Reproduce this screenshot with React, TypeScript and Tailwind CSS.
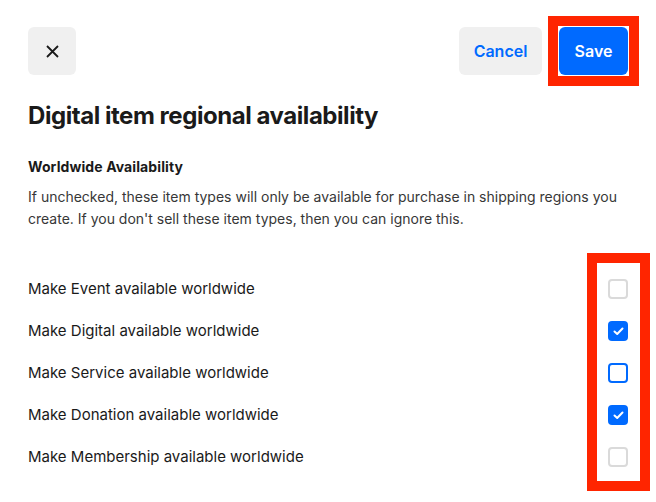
import React from 'react'

type Row = { label: string; state: 'off' | 'on' | 'focus' }

const rows: Row[] = [
  { label: 'Make Event available worldwide', state: 'off' },
  { label: 'Make Digital available worldwide', state: 'on' },
  { label: 'Make Service available worldwide', state: 'focus' },
  { label: 'Make Donation available worldwide', state: 'on' },
  { label: 'Make Membership available worldwide', state: 'off' },
]

function Checkbox({ state }: { state: Row['state'] }) {
  if (state === 'on') {
    return (
      <div className="w-5 h-5 rounded-[4px] bg-[#006aff] flex items-center justify-center">
        <svg width="11" height="9" viewBox="0 0 11 9" fill="none">
          <path d="M1.5 4.5L4.2 7L9.5 1.5" stroke="white" strokeWidth="2" strokeLinecap="round" strokeLinejoin="round" />
        </svg>
      </div>
    )
  }
  return (
    <div
      className={
        state === 'focus'
          ? 'w-5 h-5 rounded-[4px] border-2 border-[#006aff] bg-white'
          : 'w-5 h-5 rounded-[4px] border-2 border-[#dadada] bg-white'
      }
    />
  )
}

export default function App() {
  return (
    <div className="w-[656px] h-[502px] bg-white px-7 font-['Inter',sans-serif] text-[#1a1a1a] overflow-hidden">
      {/* Header */}
      <div className="flex items-center justify-between pt-[27px]">
        <button className="w-12 h-12 rounded-md bg-[#f0f0f0] flex items-center justify-center">
          <svg width="13" height="13" viewBox="0 0 13 13" fill="none">
            <path d="M1 1L12 12M12 1L1 12" stroke="#1a1a1a" strokeWidth="1.8" />
          </svg>
        </button>
        <div className="flex items-center gap-[17px]">
          <button className="w-[83px] h-12 rounded-md bg-[#f0f0f0] text-[#006aff] text-base font-semibold">
            Cancel
          </button>
          <div className="relative">
            <button className="w-[69px] h-12 rounded-md bg-[#006aff] text-white text-base font-semibold">
              Save
            </button>
            <div className="absolute -inset-[11px] border-[10px] border-[#ff2500] pointer-events-none" />
          </div>
        </div>
      </div>

      {/* Title */}
      <h1 className="mt-[25px] text-2xl leading-8 font-bold tracking-[-0.45px]">Digital item regional availability</h1>

      <h2 className="mt-[25px] text-sm leading-5 font-bold tracking-[0.1px]">Worldwide Availability</h2>
      <p className="mt-[9px] text-sm leading-[22px] text-[#373737]">
        If unchecked, these item types will only be available for purchase in shipping regions you create. If you
        don't sell these item types, then you can ignore this.
      </p>

      {/* Options */}
      <div className="relative mt-[38px]">
        {rows.map((r) => (
          <div key={r.label} className="h-[42px] flex items-center justify-between">
            <span className="text-[15px]">{r.label}</span>
            <Checkbox state={r.state} />
          </div>
        ))}
        <div className="absolute -top-[15px] -right-[22px] w-[63px] h-[238px] border-[10px] border-[#ff2500] pointer-events-none" />
      </div>
    </div>
  )
}
